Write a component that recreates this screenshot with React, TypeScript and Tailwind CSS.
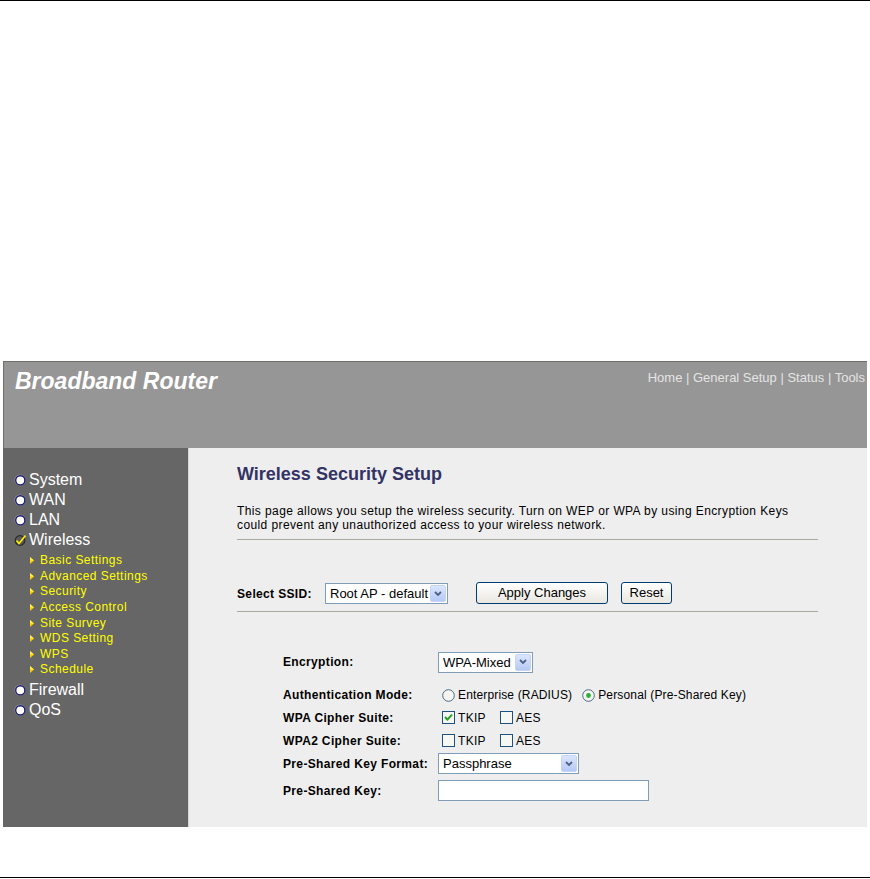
import React from 'react';

function Bullet() {
  return (
    <svg width="12" height="12" viewBox="0 0 12 12" className="shrink-0">
      <circle cx="6" cy="6" r="5.5" fill="#9a9a9a" />
      <circle cx="6.3" cy="6.3" r="4.6" fill="#ffffff" stroke="#1c1c7a" strokeWidth="1.4" />
    </svg>
  );
}

function CheckBullet() {
  return (
    <svg width="12" height="12" viewBox="0 0 12 12" className="shrink-0">
      <circle cx="6" cy="6.5" r="4.8" fill="#5a5a5a" stroke="#2a2a2a" strokeWidth="1.2" />
      <path d="M2.5 6.5 L5 9.5 L11.5 1.5" fill="none" stroke="#ffee00" strokeWidth="1.6" />
    </svg>
  );
}

function Arrow() {
  return (
    <svg width="4" height="7" viewBox="0 0 4 7" className="shrink-0">
      <path d="M0 0 L4 3.5 L0 7 Z" fill="#ffcc00" />
      <path d="M0 0 L4 3.5 L0 3.5 Z" fill="#ffee44" />
    </svg>
  );
}

function DropBtn() {
  return (
    <div className="w-[16px] h-full shrink-0 border border-[#c4d4f8] bg-gradient-to-b from-[#dbe6fd] to-[#b6c9f5] flex items-center justify-center rounded-[2px]">
      <svg width="8" height="6" viewBox="0 0 8 6">
        <path d="M1 1 L4 4 L7 1" fill="none" stroke="#4d6185" strokeWidth="1.8" />
      </svg>
    </div>
  );
}

function Select({ value, w }: { value: string; w: string }) {
  return (
    <div className={`${w} h-[21px] border border-[#7f9db9] bg-white flex items-stretch p-px`}>
      <span className="flex-1 pl-[3px] text-[13px] leading-[17px] text-black whitespace-nowrap overflow-hidden">{value}</span>
      <DropBtn />
    </div>
  );
}

function Radio({ on }: { on?: boolean }) {
  return (
    <svg width="13" height="13" viewBox="0 0 13 13" className="shrink-0">
      <circle cx="6.5" cy="6.5" r="5.8" fill="#f4f4f0" stroke="#4a6a86" strokeWidth="1" />
      {on && <circle cx="6.5" cy="6.5" r="2.4" fill="#2fae3a" />}
    </svg>
  );
}

function Check({ on }: { on?: boolean }) {
  return (
    <svg width="13" height="13" viewBox="0 0 13 13" className="shrink-0">
      <rect x="0.5" y="0.5" width="12" height="12" fill="#f6f6f3" stroke="#1c5180" />
      {on && <path d="M3 6 L5.4 8.6 L10 3.6" fill="none" stroke="#21a121" strokeWidth="2" />}
    </svg>
  );
}

function Btn({ label, w }: { label: string; w: string }) {
  return (
    <div className={`${w} h-[22px] border border-[#003c74] rounded-[3px] bg-gradient-to-b from-white to-[#e8e7e0] flex items-center justify-center text-[13px] text-black`}>
      {label}
    </div>
  );
}

const subItems = [
  'Basic Settings',
  'Advanced Settings',
  'Security',
  'Access Control',
  'Site Survey',
  'WDS Setting',
  'WPS',
  'Schedule',
];

function Sidebar() {
  const main = (label: string, icon?: React.ReactNode) => (
    <div className="h-5 flex items-center gap-[3px]">
      {icon ?? <Bullet />}
      <span className="text-[16px] leading-5 text-white">{label}</span>
    </div>
  );
  return (
    <div className="w-[186px] shrink-0 bg-[#666666] border-r border-[#d4d4d4] pt-[22px] pl-[11px]">
      {main('System')}
      {main('WAN')}
      {main('LAN')}
      {main('Wireless', <CheckBullet />)}
      <div className="mt-[3px]">
        {subItems.map((s) => (
          <div key={s} className="h-[15.6px] flex items-center pl-[16px] gap-[6px]">
            <Arrow />
            <span className="text-[12px] leading-[15px] text-[#ffff00] tracking-[0.45px]">{s}</span>
          </div>
        ))}
      </div>
      <div className="mt-[2px]">{main('Firewall')}</div>
      {main('QoS')}
    </div>
  );
}

function Row({ label, children, cls }: { label: string; children: React.ReactNode; cls: string }) {
  return (
    <div className={`flex items-center ${cls}`}>
      <span className="w-[155px] shrink-0 text-[12px] font-bold tracking-[0.35px] text-black">{label}</span>
      {children}
    </div>
  );
}

function Content() {
  return (
    <div className="flex-1 bg-[#eeeeee] pl-[48px] pt-[14px]">
      <div className="w-[581px]">
        <h1 className="text-[18px] leading-6 font-bold text-[#333366]">Wireless Security Setup</h1>
        <p className="mt-[18px] text-[12px] leading-[14px] tracking-[0.4px] text-black">
          This page allows you setup the wireless security. Turn on WEP or WPA by using Encryption Keys
          <br />
          could prevent any unauthorized access to your wireless network.
        </p>
        <div className="mt-[7px] h-px bg-[#a9a9a2]" />

        <div className="mt-[43px] h-[21px] flex items-center">
          <span className="w-[88px] shrink-0 text-[12px] font-bold tracking-[0.35px] text-black">Select SSID:</span>
          <Select value="Root AP - default" w="w-[123px]" />
          <div className="ml-[28px] -mt-[1px]">
            <Btn label="Apply Changes" w="w-[132px]" />
          </div>
          <div className="ml-[13px] -mt-[1px]">
            <Btn label="Reset" w="w-[51px]" />
          </div>
        </div>
        <div className="mt-[7px] h-px bg-[#a9a9a2]" />

        <div className="mt-[39px] pl-[46px] flex flex-col">
          <Row label="Encryption:" cls="h-[22px]">
            <Select value="WPA-Mixed" w="w-[95px]" />
          </Row>
          <Row label="Authentication Mode:" cls="h-[22px] mt-[11px]">
            <div className="flex items-center text-[12px] tracking-[0.15px] text-black">
              <span className="ml-[4px]"><Radio /></span>
              <span className="ml-[3px]">Enterprise (RADIUS)</span>
              <span className="ml-[10px]"><Radio on /></span>
              <span className="ml-[3px]">Personal (Pre-Shared Key)</span>
            </div>
          </Row>
          <Row label="WPA Cipher Suite:" cls="h-[23px]">
            <div className="flex items-center text-[12px] tracking-[0.3px] text-black">
              <span className="ml-[4px]"><Check on /></span>
              <span className="ml-[3px]">TKIP</span>
              <span className="ml-[14px]"><Check /></span>
              <span className="ml-[3px]">AES</span>
            </div>
          </Row>
          <Row label="WPA2 Cipher Suite:" cls="h-[23px]">
            <div className="flex items-center text-[12px] tracking-[0.3px] text-black">
              <span className="ml-[4px]"><Check /></span>
              <span className="ml-[3px]">TKIP</span>
              <span className="ml-[14px]"><Check /></span>
              <span className="ml-[3px]">AES</span>
            </div>
          </Row>
          <Row label="Pre-Shared Key Format:" cls="h-[23px]">
            <Select value="Passphrase" w="w-[141px]" />
          </Row>
          <Row label="Pre-Shared Key:" cls="h-[23px] mt-[4px]">
            <div className="w-[211px] h-[21px] border border-[#7f9db9] bg-white" />
          </Row>
        </div>
      </div>
    </div>
  );
}

function Header() {
  return (
    <div className="h-[87px] bg-[#969696] border-t border-l border-[#6f6f6a] flex justify-between items-start pl-[11px] pt-[8px] pr-[2px]">
      <span className="text-[23px] leading-[23px] font-bold italic text-white">Broadband Router</span>
      <span className="text-[13px] leading-[13px] text-[#e4e4e4] whitespace-pre mt-[1px]">Home | General Setup | Status | Tools</span>
    </div>
  );
}

export default function App() {
  return (
    <div className="w-[870px] h-[879px] bg-white flex flex-col overflow-hidden font-['Liberation_Sans',Arial,sans-serif]">
      <div className="h-px bg-black shrink-0" />
      <div className="h-[360px] shrink-0" />
      <div className="ml-[3px] w-[864px] flex flex-col shrink-0">
        <Header />
        <div className="flex h-[379px]">
          <Sidebar />
          <Content />
        </div>
      </div>
      <div className="flex-1" />
      <div className="h-px bg-black mb-px shrink-0" />
    </div>
  );
}
